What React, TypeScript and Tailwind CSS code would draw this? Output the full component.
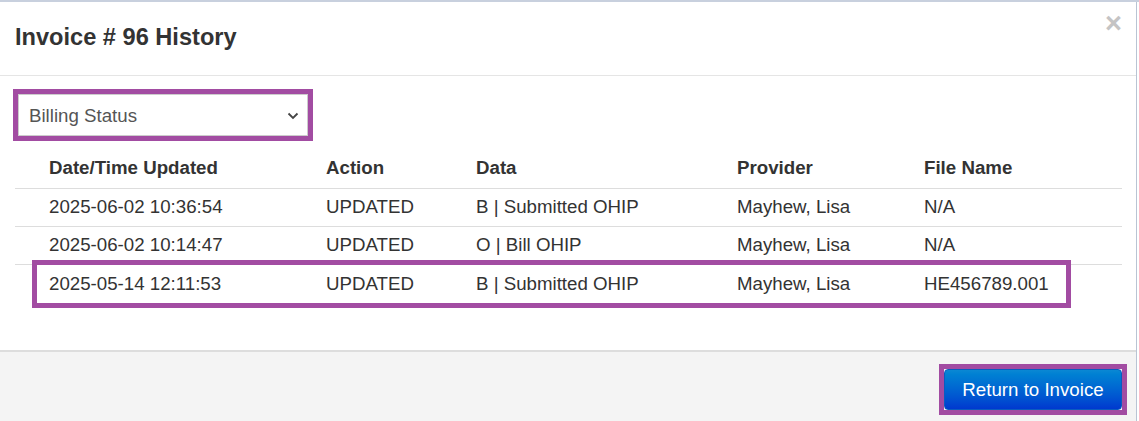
import React from "react";

const rows = [
  ["2025-06-02 10:36:54", "UPDATED", "B | Submitted OHIP", "Mayhew, Lisa", "N/A"],
  ["2025-06-02 10:14:47", "UPDATED", "O | Bill OHIP", "Mayhew, Lisa", "N/A"],
  ["2025-05-14 12:11:53", "UPDATED", "B | Submitted OHIP", "Mayhew, Lisa", "HE456789.001"],
];

const cols = "grid grid-cols-[26px_277px_150px_261px_187px_1fr]";

export default function App() {
  return (
    <div
      className="w-[1139px] h-[421px] bg-white flex flex-col overflow-hidden text-[#333]"
      style={{ fontFamily: '"Liberation Sans", Arial, sans-serif' }}
    >
      <div className="h-[2px] bg-[#c8d0de] shrink-0" />
      <div className="flex flex-1">
        <div className="w-[1137px] border-r border-[#b9c4d4] flex flex-col">
          {/* header */}
          <div className="h-[74px] border-b border-[#e5e5e5] flex items-start justify-between pl-[15px] pr-[14px] pt-[21px]">
            <h4 className="text-[23.6px] font-bold leading-[28px]">Invoice # 96 History</h4>
            <span className="text-[29px] font-bold leading-[20px] text-[#c4c4c4] mt-[-10px]">×</span>
          </div>
          {/* body */}
          <div className="h-[274px] pl-[13px] pt-[13px]">
            <div className="w-[300px] h-[52px] border-[5px] border-[#a24ca2] p-0">
              <div className="h-full border border-[#cccccc] flex items-center justify-between pl-[10px] pr-[8px] bg-white">
                <span className="text-[18.7px] text-[#555] mt-[2px]">Billing Status</span>
                <svg width="12" height="8" viewBox="0 0 12 8" className="mt-[2px]">
                  <path d="M1.5 1.5 L6 6 L10.5 1.5" fill="none" stroke="#444" strokeWidth="1.8" />
                </svg>
              </div>
            </div>
            <div className="ml-[2px] mt-[8px] w-[1107px] text-[18.7px]">
              <div className={`${cols} h-[40px] items-center font-bold border-b border-[#dddddd]`}>
                <div />
                <div className="pl-[8px]">Date/Time Updated</div>
                <div className="pl-[8px]">Action</div>
                <div className="pl-[8px]">Data</div>
                <div className="pl-[8px]">Provider</div>
                <div className="pl-[8px]">File Name</div>
              </div>
              {rows.map((r, i) => (
                <div
                  key={i}
                  className={`${cols} relative h-[38px] items-center ${i < 2 ? "border-b border-[#dddddd]" : ""}`}
                >
                  <div />
                  {r.map((c, j) => (
                    <div key={j} className="pl-[8px]">
                      {c}
                    </div>
                  ))}
                  {i === 2 && (
                    <div className="absolute left-[17px] top-[-5px] right-[51px] bottom-[-5px] border-[5px] border-[#a24ca2] pointer-events-none" />
                  )}
                </div>
              ))}
            </div>
          </div>
          {/* footer */}
          <div className="flex-1 border-t-2 border-[#dddddd] bg-[#f4f4f4] flex justify-end items-start pt-[12px] pr-[9px]">
            <div className="border-[5px] border-[#a24ca2]">
              <button className="h-[41px] w-[178px] rounded-[4px] text-white text-[18.7px] pt-[2px] bg-gradient-to-b from-[#0b88d3] to-[#0038cf] border border-[#0a5cc0]">
                Return to Invoice
              </button>
            </div>
          </div>
        </div>
        <div className="flex-1 bg-white" />
      </div>
    </div>
  );
}
